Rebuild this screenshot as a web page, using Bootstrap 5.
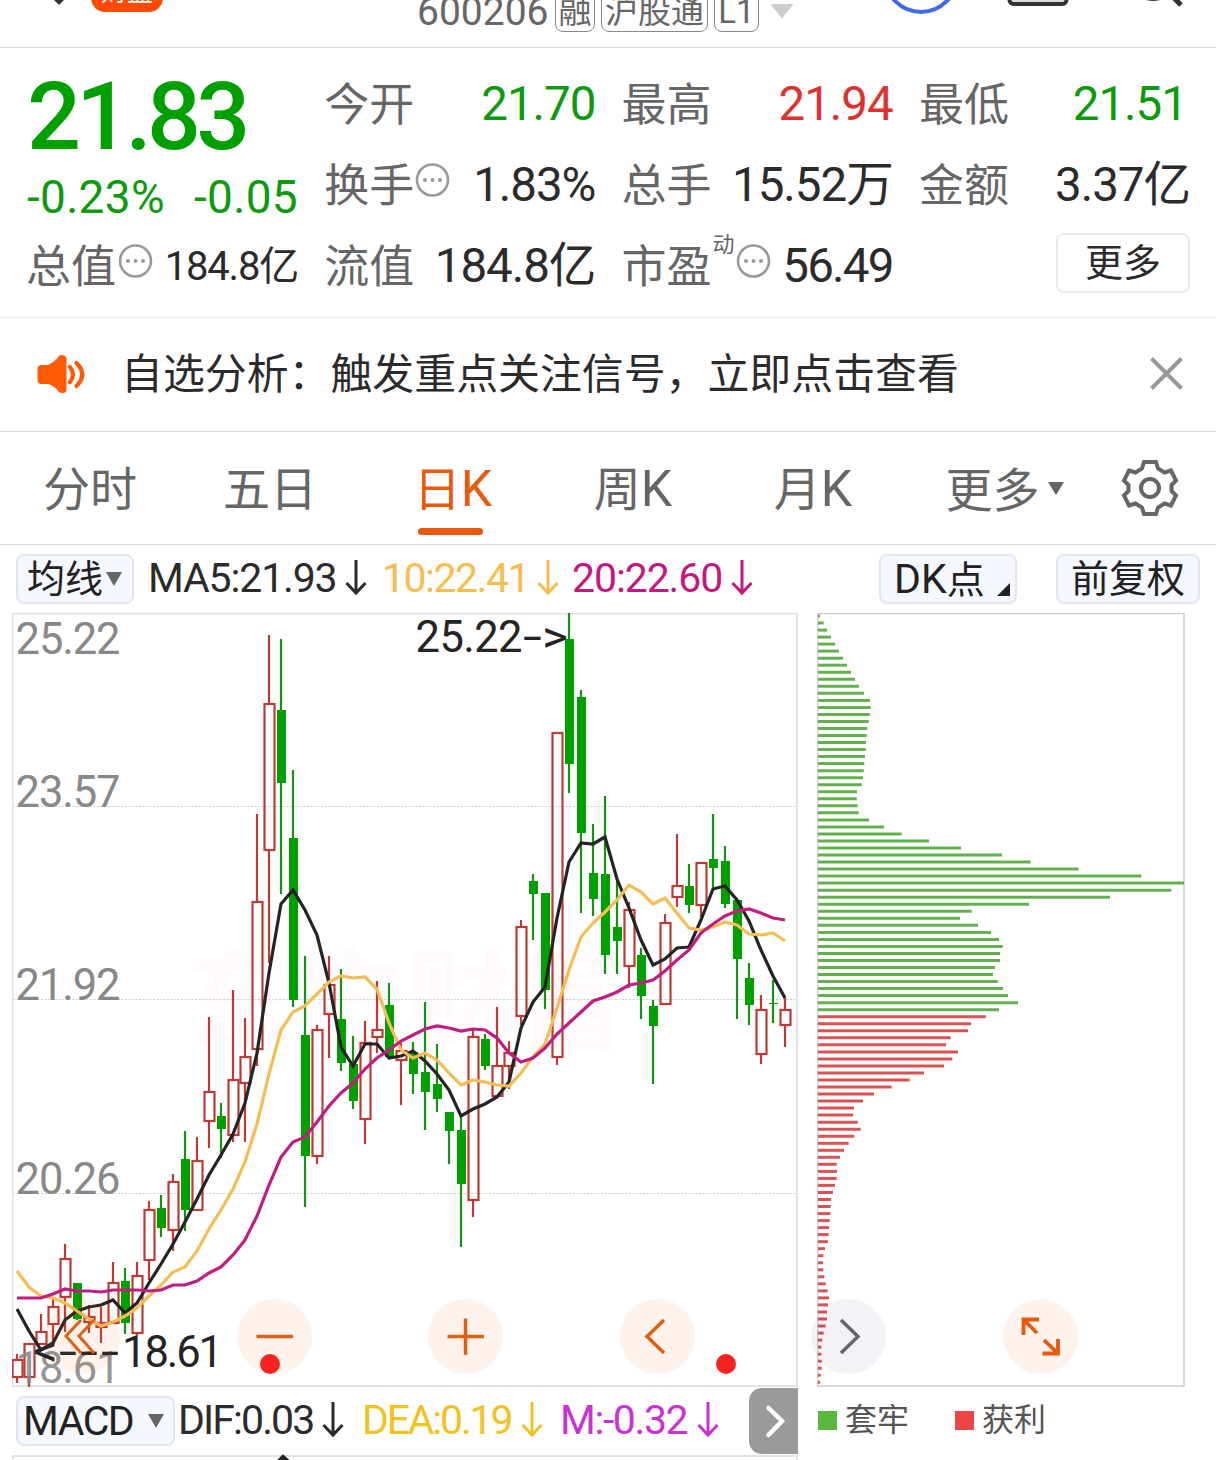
<!DOCTYPE html>
<html lang="zh-CN">
<head>
<meta charset="utf-8">
<meta name="viewport" content="width=device-width, initial-scale=1">
<title>600206 日K</title>
<link rel="stylesheet" href="https://cdn.jsdelivr.net/npm/bootstrap@5.3.0/dist/css/bootstrap.min.css">
<style>
:root{--up:#e0302f;--down:#0d9a0d;--ink:#2b2b2b;--soft:#666;--brand:#e8590c}
body{font-family:Roboto,"Noto Sans CJK SC",sans-serif;color:var(--ink);width:1216px;height:1460px;overflow:hidden;background:#fff}
svg{display:block;flex:none}
.topbar{height:48px;border-bottom:1px solid #d9d9d9;overflow:hidden}
.topbar-in{height:64px;margin-top:-20px}
.brandtag{width:72px;height:42px;margin-left:91px;margin-top:-42px;border-radius:14px;background:#ff4a05;color:#fff;font-size:26px;line-height:44px}
.symcode{font-size:39px;color:var(--soft);line-height:64px;margin-left:254px;width:138px;letter-spacing:0}
.tagbox{height:42px;border:1.5px solid #888;border-radius:8px;color:var(--soft);font-size:33px;line-height:42px;margin-top:-2px;text-align:center}
.quote{height:270px;padding:14px 27px 0 27px;border-bottom:1px solid #ececec;display:grid;grid-template-columns:271px repeat(3,270px);column-gap:27.300px;grid-template-rows:repeat(3,81px)}
.pricecol{grid-row:span 2}
.price{font-size:95px;font-weight:500;color:#00a000;line-height:110px;height:109px;letter-spacing:-4.8px}
.change{font-size:46px;line-height:53px;color:var(--down);letter-spacing:.3px}
.lbl{font-size:45px;color:var(--soft);line-height:87px;height:81px;margin-left:-1px}
.val{font-size:47.5px;line-height:85px;height:81px;letter-spacing:-1.05px}
.val.sm-val{font-size:40px;letter-spacing:-1.2px;line-height:85px}
.val.last-val{margin-right:3px}
.up{color:var(--up)}.down{color:var(--down)}
.supdong{font-size:22px;color:var(--soft);line-height:24px;margin-top:-40px}
.morebtn{width:134px;height:60px;border:2px solid #e8eaed;border-radius:8px;font-size:38px;line-height:57px;text-align:center;margin:-3px 0 0 0}
.notice{height:114px;border-bottom:1px solid #d9d9d9;padding:0 33px 2px 37px}
.notice-txt{font-size:41.9px;line-height:60px;margin-left:35px;padding-top:2px}
.tabs{height:113px;border-bottom:1px solid #d9d9d9}
.tabitem{width:180px;height:112px;font-size:47px;line-height:115px;color:var(--soft);text-align:center}
.latk{font-size:50px;margin-right:-6px;line-height:1}
.tabitem.on{color:var(--brand)}
.tabitem.on::after{content:"";position:absolute;left:58px;top:96px;width:65px;height:7px;border-radius:4px;background:var(--brand)}
.pill{height:50px;background:#f5f8fe;border:2px solid #e2e5ee;border-radius:8px;font-size:38px;line-height:46px;color:#222;white-space:nowrap}
.inds{height:68px;padding:9px 16px 0}
.ind{font-size:41px;line-height:49px;white-space:nowrap}
.t1{letter-spacing:-1.15px;width:189px}.t2{letter-spacing:-1.5px;width:147px}.t3{letter-spacing:-1.1px;width:151px}
.t4{letter-spacing:-1.500px}.t5{letter-spacing:-1.9px;width:136px}.t6{letter-spacing:-2.2px;width:151px}.t7{letter-spacing:-1.4px;width:129px}
.charts{height:774px;padding-left:12px}
.macd{height:68px;padding-left:16px}
.tools{left:45px;top:686px;gap:116.6px}
.roundbtn{width:75px;height:75px;border-radius:50%;background:rgba(245,90,30,.08)}
.roundbtn.off{background:rgba(110,60,140,.065)}
.reddot{width:20px;height:20px;border-radius:50%;background:#f52222;top:741px}
.sidebtn{width:49px;height:66px;border-radius:13px 0 0 13px;background:#9b999c}
.sq{width:19px;height:19px}
.legend-txt{font-size:32px;line-height:62px;color:#555}
.subbox{height:20px;width:786px;margin-left:12px;border:2px solid #e3e3e3;border-bottom:0}
</style>
</head>
<body>
<header class="topbar">
  <div class="topbar-in d-flex align-items-center position-relative">
    <div class="brandtag text-center">财盘</div>
    <div class="symcode">600206</div>
    <div class="d-flex" style="gap:6px">
      <div class="tagbox" style="width:40px">融</div>
      <div class="tagbox" style="width:107px">沪股通</div>
      <div class="tagbox" style="width:45px">L1</div>
    </div>
    <svg class="position-absolute" style="left:0;top:20px" width="1216" height="47">
      <path d="M53 -1L59 5L65 -1Z" fill="#333"/>
      <path d="M770.5 4H793.500L782 18.500Z" fill="#ccc"/>
      <circle cx="921" cy="-24" r="36" fill="none" stroke="#4169ee" stroke-width="4"/>
      <rect x="1009.500" y="-40" width="57" height="44" rx="4" fill="#ddd" stroke="#333" stroke-width="4"/>
      <circle cx="1153" cy="-21" r="20" fill="none" stroke="#333" stroke-width="4"/>
      <path d="M1168 -8L1181 5" stroke="#333" stroke-width="5"/>
    </svg>
  </div>
</header>

<section class="quote">
  <div class="pricecol">
    <div class="price">21.83</div>
    <div class="change d-flex justify-content-between"><span>-0.23%</span><span>-0.05</span></div>
  </div>
  <div class="d-flex justify-content-between"><span class="lbl">今开</span><span class="val down">21.70</span></div>
  <div class="d-flex justify-content-between"><span class="lbl">最高</span><span class="val up">21.94</span></div>
  <div class="d-flex justify-content-between"><span class="lbl">最低</span><span class="val down last-val">21.51</span></div>
  <div class="d-flex align-items-center"><span class="lbl">换手</span><svg style="margin-left:1px" width="36" height="44"><use href="#more-dots"/></svg><span class="val ms-auto">1.83%</span></div>
  <div class="d-flex justify-content-between"><span class="lbl">总手</span><span class="val">15.52万</span></div>
  <div class="d-flex justify-content-between"><span class="lbl">金额</span><span class="val">3.37亿</span></div>
  <div class="d-flex align-items-center"><span class="lbl">总值</span><svg style="margin-left:2px" width="36" height="44"><use href="#more-dots"/></svg><span class="val sm-val ms-auto">184.8亿</span></div>
  <div class="d-flex justify-content-between"><span class="lbl">流值</span><span class="val">184.8亿</span></div>
  <div class="d-flex align-items-center"><span class="lbl">市盈</span><span class="supdong" style="margin-left:1px">动</span><svg style="margin-left:1px" width="36" height="44"><use href="#more-dots"/></svg><span class="val ms-auto" style="letter-spacing:-1.8px">56.49</span></div>
  <div class="d-flex align-items-center justify-content-end"><div class="morebtn">更多</div></div>
</section>

<section class="notice d-flex align-items-center">
  <svg width="49" height="40" viewBox="37 353 49 40"><path d="M42 364H48Q55 361 59 355Q61 353.500 64 354.500Q66.500 355 66.500 358V389Q66.500 391.500 64 392Q61 392.500 59 391Q55 385 48 383H42Q37.500 383 37.500 379V368Q37.500 364 42 364Z" fill="#ff5a05"/><path d="M70 366Q76 373.500 70 381M76.500 362Q88 373.500 76.500 385" fill="none" stroke="#ff5a05" stroke-width="4.200" stroke-linecap="round"/></svg>
  <div class="notice-txt">自选分析：触发重点关注信号，立即点击查看</div>
  <svg class="ms-auto" width="33" height="33"><path d="M1.500 1.500L31.500 31.500M31.500 1.500L1.500 31.500" stroke="#999" stroke-width="4"/></svg>
</section>

<nav class="tabs d-flex">
  <div class="tabitem">分时</div><div class="tabitem">五日</div><div class="tabitem on position-relative">日<span class="latk">K</span></div><div class="tabitem">周<span class="latk">K</span></div><div class="tabitem">月<span class="latk">K</span></div>
  <div class="tabitem d-flex align-items-center justify-content-center" style="width:209px"><span class="pt-1">更多</span><svg class="ms-2" width="16" height="13"><path d="M0 0H16L8 13Z" fill="#666"/></svg></div>
  <svg class="align-self-center" width="60" height="60" viewBox="-30 -30 60 60" style="margin-left:11px"><path d="M-6 -26H6L8 -19.500L14.500 -15.500L21 -17.500L26 -7.500L21.500 -3V3L26 7.500L21 17.500L14.500 15.500L8 19.500L6 26H-6L-8 19.500L-14.500 15.500L-21 17.500L-26 7.500L-21.500 3V-3L-26 -7.500L-21 -17.500L-14.500 -15.500L-8 -19.500Z" fill="none" stroke="#666" stroke-width="4"/><circle r="9" fill="none" stroke="#666" stroke-width="4"/></svg>
</nav>

<section class="inds d-flex">
  <div class="pill d-flex align-items-center" style="width:118px;padding-left:9px">均线<svg style="margin-left:3px" width="17" height="14"><path d="M0 0H16L8 14Z" fill="#666"/></svg></div>
  <div class="ind d-flex" style="margin-left:14px;width:234px"><span class="t1">MA5:21.93</span><svg style="margin:6px 0 0 8px" width="22" height="36"><use href="#arr"/></svg></div>
  <div class="ind d-flex" style="width:190px;color:#f6bd50"><span class="t2">10:22.41</span><svg style="margin:6px 0 0 8px" width="22" height="36"><use href="#arr"/></svg></div>
  <div class="ind d-flex" style="color:#c4177f"><span class="t3">20:22.60</span><svg style="margin:6px 0 0 8px" width="22" height="36"><use href="#arr"/></svg></div>
  <div class="pill ms-auto position-relative" style="width:138px;padding-left:13px"><span style="font-size:41px">DK</span>点<svg class="position-absolute" style="right:5px;bottom:6px" width="13" height="13"><path d="M13 0V13H0Z" fill="#222"/></svg></div>
  <div class="pill text-center" style="width:144px;margin-left:39px">前复权</div>
</section>

<section class="charts d-flex position-relative">
  <svg id="kline" width="786" height="774" viewBox="12 613 786 774"></svg>
  <svg id="chips" width="369" height="774" viewBox="817 613 369 774" style="margin-left:19px"></svg>
  <div class="tools position-absolute d-flex">
    <div class="roundbtn"><svg width="75" height="75"><path d="M36 21L21 37L36 54M49 21L34 37L49 54" fill="none" stroke="#dd6014" stroke-width="3"/></svg></div>
    <div class="roundbtn"><svg width="75" height="75"><path d="M19.500 37.500H56" stroke="#dd6014" stroke-width="3.500"/></svg></div>
    <div class="roundbtn"><svg width="75" height="75"><path d="M19.500 37.500H56M37.500 19.500V56" stroke="#dd6014" stroke-width="3.500"/></svg></div>
    <div class="roundbtn"><svg width="75" height="75"><path d="M44 21L27 37.500L44 54" fill="none" stroke="#dd6014" stroke-width="3.500"/></svg></div>
    <div class="roundbtn off"><svg width="75" height="75"><path d="M30 21L47 37.500L30 54" fill="none" stroke="#666" stroke-width="3.500"/></svg></div>
    <div class="roundbtn"><svg width="75" height="75"><path d="M20.500 36V20.500H36M20.500 20.500L34 34M55 40V54.500H39.500M55 54.500L41 41" fill="none" stroke="#e8590c" stroke-width="3.800"/></svg></div>
  </div>
  <span class="reddot position-absolute" style="left:260px"></span>
  <span class="reddot position-absolute" style="left:716px"></span>
</section>

<section class="macd d-flex align-items-start">
  <div class="pill d-flex align-items-center" style="width:159px;margin-top:9px;padding-left:5px;font-size:41px"><span class="t4">MACD</span><svg style="margin-left:auto;margin-right:8px" width="17" height="14"><path d="M0 0H16L8 14Z" fill="#666"/></svg></div>
  <div class="ind d-flex" style="margin:9px 0 0 3px;width:184px"><span class="t5">DIF:0.03</span><svg style="margin:6px 0 0 8px" width="22" height="36"><use href="#arr"/></svg></div>
  <div class="ind d-flex" style="margin-top:9px;width:198px;color:#f0c323"><span class="t6">DEA:0.19</span><svg style="margin:6px 0 0 8px" width="22" height="36"><use href="#arr"/></svg></div>
  <div class="ind d-flex" style="margin-top:9px;width:189px;color:#c932d0"><span class="t7">M:-0.32</span><svg style="margin:6px 0 0 8px" width="22" height="36"><use href="#arr"/></svg></div>
  <div class="sidebtn" style="margin-top:1px"><svg width="49" height="66"><path d="M19.500 20L33 33L19.500 47" fill="none" stroke="#fff" stroke-width="4.500" stroke-linecap="round"/></svg></div>
  <div class="d-flex align-items-center" style="margin:2px 0 0 20px"><span class="sq" style="background:#5ab83f"></span><span class="legend-txt" style="margin:0 46px 0 8px">套牢</span><span class="sq" style="background:#ee4545"></span><span class="legend-txt" style="margin-left:8px">获利</span></div>
</section>
<div class="subbox"><svg width="782" height="5" style="overflow:visible"><path d="M263 6L269 0L276 6" fill="none" stroke="#222" stroke-width="4"/></svg></div>

<svg width="0" height="0" class="position-absolute">
  <symbol id="more-dots" viewBox="0 0 36 44" overflow="visible"><g fill="none" stroke="#999" stroke-width="2.600"><circle cx="17.500" cy="18" r="15.500"/></g><g fill="#999"><circle cx="10" cy="18" r="2"/><circle cx="17.500" cy="18" r="2"/><circle cx="25" cy="18" r="2"/></g></symbol>
  <symbol id="arr" viewBox="0 0 22 36"><path d="M11 0V32M1.500 23L11 33L20.500 23" fill="none" stroke="currentColor" stroke-width="3"/></symbol>
</svg>
<script src="https://cdn.jsdelivr.net/npm/bootstrap@5.3.0/dist/js/bootstrap.bundle.min.js"></script>
<script>
// each candle: direction (1 rising, 0 falling), high, body top, body bottom, low
const K=[[1,1354,1360,1377,1383],[1,1344,1344,1377,1387],[1,1314,1332,1344,1344],[1,1299,1307,1324,1344],[1,1244,1259,1297,1332],[0,1283,1283,1319,1320],[1,1305,1317,1322,1333],[1,1307,1323,1327,1343],[1,1262,1283,1323,1323],[0,1268,1281,1323,1334],[1,1262,1276,1333,1335],[1,1201,1210,1260,1280],[0,1195,1208,1228,1237],[1,1174,1182,1230,1251],[0,1131,1159,1210,1231],[1,1137,1161,1210,1210],[1,1017,1092,1121,1148],[0,1103,1116,1129,1158],[1,990,1080,1135,1142],[1,1018,1057,1083,1142],[1,814,902,1049,1066],[1,635,704,850,963],[0,639,710,783,894],[0,770,838,1000,1007],[0,956,1035,1156,1207],[1,1025,1030,1156,1164],[1,956,985,1014,1058],[0,969,1019,1063,1071],[0,1036,1064,1101,1109],[1,1021,1043,1119,1144],[1,981,1030,1037,1053],[0,983,1005,1057,1058],[1,1043,1051,1060,1105],[0,1042,1052,1074,1094],[0,1002,1072,1092,1130],[0,1044,1084,1099,1112],[0,1112,1112,1131,1164],[0,1115,1130,1184,1247],[1,1028,1037,1200,1217],[0,1034,1039,1066,1070],[1,1007,1066,1096,1096],[1,1041,1053,1066,1089],[1,920,927,1016,1025],[0,874,881,894,940],[0,893,893,990,1009],[1,733,733,1057,1065],[0,613,639,764,793],[0,690,697,833,913],[0,824,873,899,916],[0,796,874,955,974],[0,877,927,941,974],[1,902,910,966,988],[0,948,955,996,1019],[0,1000,1006,1026,1084],[1,914,923,1004,1004],[1,834,886,897,907],[0,864,886,905,913],[1,863,863,905,917],[0,814,859,868,888],[0,846,861,904,908],[0,900,900,959,1019],[0,963,978,1005,1025],[1,995,1010,1054,1064],[0,980,1003,1004,1023],[1,998,1010,1025,1047]];
const M5=[1309,1331,1350,1343,1320,1311,1307,1305,1300,1313,1303,1283,1264,1244,1222,1199,1175,1155,1134,1103,1053,973,904,890,910,935,983,1047,1066,1044,1044,1058,1056,1051,1061,1074,1090,1116,1109,1104,1097,1082,1028,1002,987,918,862,843,844,837,879,908,940,965,959,948,947,920,889,886,900,921,950,976,998];
const M10=[1271,1287,1296,1298,1303,1311,1319,1326,1322,1316,1308,1296,1285,1272,1267,1251,1229,1210,1189,1162,1124,1074,1030,1012,1006,994,982,976,978,977,989,1023,1050,1058,1053,1060,1073,1085,1080,1082,1085,1086,1073,1057,1044,1008,970,937,923,912,900,885,892,904,898,913,928,930,927,922,925,934,935,933,941];
const M20=[1298,1298,1298,1294,1289,1291,1291,1292,1290,1290,1290,1291,1290,1285,1285,1281,1273,1267,1255,1240,1216,1185,1157,1142,1137,1122,1106,1093,1083,1069,1058,1050,1041,1035,1029,1026,1028,1031,1029,1030,1038,1053,1062,1058,1048,1034,1023,1012,1001,997,992,985,983,980,971,960,950,933,924,916,911,909,913,918,920];
const X=i=>17+12*i;
let s='<text x="185" y="1040" font-size="108" font-weight="700" textLength="440" fill="#fffbfd">东方财富</text>';
for(const y of [806.5,999.5,1193.5]) s+=`<path d="M13 ${y}H797" stroke="#cfcfcf" stroke-dasharray="2 1.500"/>`;
s+='<rect x="12.500" y="613.500" width="784.500" height="772.500" fill="none" stroke="#e0e0e0" stroke-width="1.800"/>';
K.forEach((k,i)=>{const[u,h,t,b,l]=k,x=X(i);
 if(u){s+=`<path d="M${x} ${h}V${t}M${x} ${b}V${l}" stroke="#bb3c36" stroke-width="2.200"/><rect x="${x-4.5}" y="${t}" width="10" height="${b-t}" fill="none" stroke="#bb3c36" stroke-width="2.200"/>`}
 else{s+=`<path d="M${x} ${h}V${l}" stroke="#129312" stroke-width="2.200"/><rect x="${x-4}" y="${t}" width="9" height="${b-t}" fill="#00a000"/>`}});
const ln=(a,c)=>`<polyline points="${a.map((y,i)=>X(i)+','+y).join(' ')}" fill="none" stroke="${c}" stroke-width="3.200"/>`;
s+=ln(M5,'#242424')+ln(M10,'#f4bd55')+ln(M20,'#bf1d80');
[['25.22',654],['23.57',807],['21.92',1000],['20.26',1194],['18.61',1383]].forEach(t=>s+=`<text x="15.500" y="${t[1]}" font-size="43.500" textLength="105" fill="#888" ${t[1]==1383?'fill-opacity=".9"':''}>${t[0]}</text>`);
const wide=(x,y,w,t)=>`<text x="${x}" y="${y}" textLength="${w}" lengthAdjust="spacingAndGlyphs">${t}</text>`;
s+='<g fill="#242424" font-size="43.500"><text x="415.500" y="652" textLength="107">25.22</text>'+wide(523,652,19,'-')+wide(542,652,26,'&gt;')+wide(33,1366,25,'&lt;')+wide(59,1367,18,'-')+wide(80,1367,18,'-')+wide(101,1367,18,'-')+'<text x="122" y="1367" textLength="101">18.61</text></g>';
document.getElementById('kline').innerHTML=s;
// chip distribution: bar lengths in thirds of a pixel, trapped holders then profitable ones
const G=[6,17,27,39,51,63,75,87,99,111,123,138,156,158,155,152,148,146,144,143,141,139,137,135,131,117,116,119,122,153,198,251,333,429,552,638,782,970,1098,1060,876,633,461,426,480,519,543,554,546,546,531,525,539,555,570,600,543];
const R=[503,459,450,398,384,420,403,378,318,275,221,168,135,108,105,119,128,109,92,78,66,56,57,56,51,45,39,38,37,35,33,32,30,21,16,15,16,19,23,29,33,30,27,27,23,17,13,10,10,11,11,8,6];
let c='<rect x="817.500" y="613.500" width="366.500" height="772.500" fill="none" stroke="#cdcdcd" stroke-width="1.500"/>';
G.concat(R).forEach((w,i)=>c+=`<path d="M818 ${(616+i*7.03).toFixed(1)}h${(w/3).toFixed(1)}" stroke="${i<57?'#62b04e':'#d95353'}" stroke-width="3"/>`);
document.getElementById('chips').innerHTML=c;
</script>
</body>
</html>
